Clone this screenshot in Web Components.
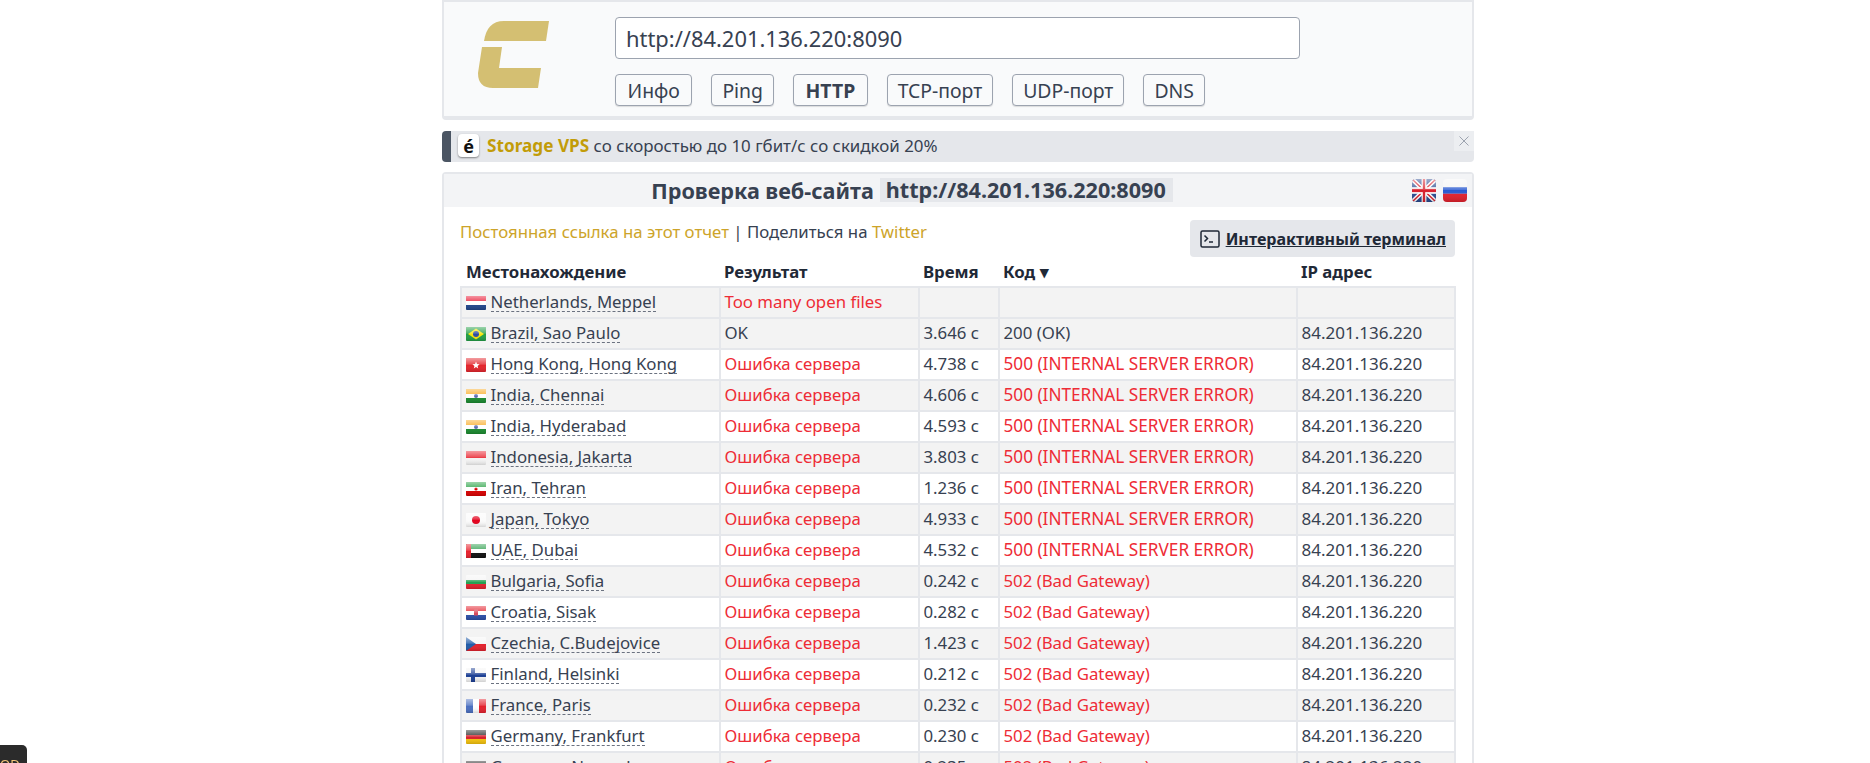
<!DOCTYPE html>
<html>
<head>
<meta charset="utf-8">
<style>
  html, body { margin: 0; padding: 0; background: #fff; overflow: hidden; height: 763px; }
  body { font-family: "Noto Sans", "Liberation Sans", sans-serif; color: #374151; font-size: 16.8px; }
</style>
</head>
<body>
<check-page></check-page>
<corner-box></corner-box>

<script>
// flag drawings, all on a 20x14 box
const FLAGS = {
  nl: `<rect width="20" height="5" fill="#e8112d"/><rect y="5" width="20" height="4" fill="#fff"/><rect y="9" width="20" height="5" fill="#21468b"/>`,
  br: `<rect width="20" height="14" fill="#229e45"/><path d="M10 1.500 18 7 10 12.500 2 7z" fill="#f8e509"/><circle cx="10" cy="7" r="3" fill="#2b49a3"/>`,
  hk: `<rect width="20" height="14" fill="#e3242b"/><path d="M10 3.500 11 6 13.600 6.200 11.600 7.900 12.200 10.500 10 9.100 7.800 10.500 8.400 7.900 6.400 6.200 9 6z" fill="#fff"/>`,
  in: `<rect width="20" height="5" fill="#f9a91f"/><rect y="5" width="20" height="4" fill="#fff"/><rect y="9" width="20" height="5" fill="#1a8a2f"/><circle cx="10" cy="7" r="2" fill="#5a6bb0"/>`,
  id: `<rect width="20" height="7" fill="#e8202c"/><rect y="7" width="20" height="7" fill="#f4f4f4"/>`,
  ir: `<rect width="20" height="5" fill="#239f40"/><rect y="5" width="20" height="4" fill="#fff"/><rect y="9" width="20" height="5" fill="#da0000"/><circle cx="10" cy="7" r="1.600" fill="#da0000"/>`,
  jp: `<rect width="20" height="14" fill="#fafafa"/><circle cx="10" cy="7" r="4" fill="#e3001b"/>`,
  ae: `<rect width="20" height="5" fill="#2a9d4a"/><rect y="5" width="20" height="4" fill="#fff"/><rect y="9" width="20" height="5" fill="#111"/><rect width="5" height="14" fill="#e8202c"/>`,
  bg: `<rect width="20" height="5" fill="#f4f4f4"/><rect y="5" width="20" height="4" fill="#22a050"/><rect y="9" width="20" height="5" fill="#e3202c"/>`,
  hr: `<rect width="20" height="5" fill="#e3202c"/><rect y="5" width="20" height="4" fill="#fff"/><rect y="9" width="20" height="5" fill="#2a4fa8"/><rect x="8" y="3.500" width="4" height="6" fill="#d8485a"/>`,
  cz: `<rect width="20" height="7" fill="#f4f4f4"/><rect y="7" width="20" height="7" fill="#e3202c"/><path d="M0 0 10 7 0 14z" fill="#1f5aa8"/>`,
  fi: `<rect width="20" height="14" fill="#f4f4f4"/><rect y="5" width="20" height="4" fill="#1c3f94"/><rect x="5" width="4" height="14" fill="#1c3f94"/>`,
  fr: `<rect width="7" height="14" fill="#4a6fc0"/><rect x="7" width="6" height="14" fill="#fff"/><rect x="13" width="7" height="14" fill="#e3202c"/>`,
  de: `<rect width="20" height="5" fill="#222"/><rect y="5" width="20" height="4" fill="#d8202c"/><rect y="9" width="20" height="5" fill="#f4c20d"/>`,
  gb: `<rect width="20" height="14" fill="#2a4a8f"/><path d="M0 0 20 14M20 0 0 14" stroke="#fff" stroke-width="3"/><path d="M0 0 20 14M20 0 0 14" stroke="#d8202c" stroke-width="1"/><rect x="8" width="4" height="14" fill="#fff"/><rect y="5" width="20" height="4" fill="#fff"/><rect x="9" width="2" height="14" fill="#d8202c"/><rect y="6" width="20" height="2" fill="#d8202c"/>`,
  ru: `<rect width="20" height="5" fill="#f4f4f4"/><rect y="5" width="20" height="4" fill="#2a5ad0"/><rect y="9" width="20" height="5" fill="#e3202c"/>`
}

class WorldFlag extends HTMLElement {
  connectedCallback() {
    const code = this.getAttribute('code')
    const id = 'gloss'
    this.attachShadow({ mode: 'open' }).innerHTML = `
      <style>
        :host { display: inline-flex; flex: none; }
        svg { display: block; border-radius: 1px; }
        :host([big]) svg { border-radius: 4px; }
      </style>
      <svg width="100%" height="100%" viewBox="0 0 20 14" preserveAspectRatio="none">
        <defs><linearGradient id="${id}" x1="0" y1="0" x2="0" y2="1">
          <stop offset="0" stop-color="#fff" stop-opacity=".55"/>
          <stop offset=".45" stop-color="#fff" stop-opacity=".2"/>
          <stop offset=".5" stop-color="#fff" stop-opacity="0"/>
          <stop offset="1" stop-color="#000" stop-opacity=".15"/>
        </linearGradient></defs>
        ${FLAGS[code]}
        <rect width="20" height="14" fill="url(#${id})"/>
      </svg>`
  }
}
customElements.define('world-flag', WorldFlag)

class ToolButton extends HTMLElement {
  constructor() {
    super()
    this.attachShadow({ mode: 'open' }).innerHTML = `
      <style>
        :host {
          display: inline-flex; align-items: center; height: 32px; box-sizing: border-box;
          padding: 0 10px; background: #f9fafb; color: #374151;
          border: 1px solid #9ca3af; border-radius: 4px; font-size: 19.4px;
          box-shadow: 0 1px 1px rgba(0,0,0,.12);
        }
        :host([wide]) { padding: 0 11.5px; }
        :host([active]) { font-weight: 700; }
      </style>
      <slot></slot>`
  }
}
customElements.define('tool-button', ToolButton)

class TopPanel extends HTMLElement {
  constructor() {
    super()
    this.attachShadow({ mode: 'open' }).innerHTML = `
      <style>
        :host {
          display: flex; box-sizing: border-box; height: 120px; background: #f9fafb;
          border: 2px solid #e5e7eb; border-bottom-width: 4px;
          border-radius: 0 0 4px 4px;
        }
        .logo { width: 171px; flex: none; padding: 19px 0 0 34px; box-sizing: border-box; }
        .form { display: flex; flex-direction: column; gap: 15px; padding-top: 15px; }
        .url {
          width: 685px; height: 42px; box-sizing: border-box; padding: 0 10px;
          display: flex; align-items: center; background: #fff;
          border: 1px solid #9ca3af; border-radius: 4px; font-size: 21.9px; color: #374151;
        }
        .tools { display: flex; gap: 19px; }
      </style>
      <div class="logo">
        <svg width="72" height="68" viewBox="0 0 72 68">
          <path d="M6 20C8 7 14 0 26 0H71L68 20Z" fill="#d4bf72"/>
          <path d="M4 26H24L21 47H63L60 67H15Q0 67 0 52Z" fill="#d4bf72"/>
        </svg>
      </div>
      <div class="form">
        <div class="url">http://84.201.136.220:8090</div>
        <div class="tools">
          <tool-button wide>Инфо</tool-button>
          <tool-button>Ping</tool-button>
          <tool-button wide active>HTTP</tool-button>
          <tool-button>TCP-порт</tool-button>
          <tool-button>UDP-порт</tool-button>
          <tool-button>DNS</tool-button>
        </div>
      </div>`
  }
}
customElements.define('top-panel', TopPanel)

class PromoBar extends HTMLElement {
  constructor() {
    super()
    this.attachShadow({ mode: 'open' }).innerHTML = `
      <style>
        :host {
          display: flex; align-items: center; position: relative; height: 31px; box-sizing: border-box;
          margin-top: 11px; background: #e5e7eb; border-left: 9px solid #4b5563;
          border-radius: 4px; font-size: 16.9px; color: #374151; padding: 0 0 2px 7px; gap: 8px;
        }
        .e {
          width: 21px; height: 23px; background: #fff; border-radius: 4px; color: #111;
          display: flex; align-items: center; justify-content: center; font-weight: 700; font-size: 18px;
          box-shadow: 0 1px 2px rgba(0,0,0,.45);
        }
        b { color: #c29c08; font-weight: 700; font-size: 17.2px; }
        .close {
          position: absolute; right: 0; top: 0; width: 20px; height: 20px; background: #eceef1;
          display: flex; align-items: center; justify-content: center;
        }
      </style>
      <div class="e">é</div>
      <div><b>Storage VPS</b> со скоростью до 10 гбит/с со скидкой 20%</div>
      <div class="close">
        <svg width="10" height="10" viewBox="0 0 10 10"><path d="M.5.5 9.500 9.500M9.500.5.5 9.500" stroke="#9ca3af" stroke-width="1" fill="none"/></svg>
      </div>`
  }
}
customElements.define('promo-bar', PromoBar)

class ResultRow extends HTMLElement {
  connectedCallback() {
    const d = JSON.parse(this.getAttribute('data'))
    const codeBad = d.code && d.code !== '200 (OK)'
    const codeCls = d.code === '500 (INTERNAL SERVER ERROR)' ? 'long' : ''
    this.attachShadow({ mode: 'open' }).innerHTML = `
      <style>
        :host {
          display: grid; grid-template-columns: 259px 199px 80px 298px 160px; height: 31px;
          box-sizing: border-box; border-top: 2px solid #e5e7eb; background: #fff; font-size: 16.8px; color: #374151;
        }
        :host([odd]) { background: #f3f3f3; }
        div { display: flex; align-items: center; padding: 0 0 2px 3.5px; border-left: 2px solid #e5e7eb; box-sizing: border-box; white-space: nowrap; gap: 5px; }
        div:first-child { padding-left: 5px; font-size: 16.3px; }
        div:last-child { border-right: 2px solid #e5e7eb; font-size: 17px; }
        div.long { font-size: 17.2px; }
        world-flag { width: 20px; height: 14px; margin-top: 2px; }
        span { border-bottom: 1px dashed #6b7280; line-height: 19px; }
        .bad { color: #ee2c36; }
      </style>
      <div><world-flag code="${d.flag}"></world-flag><span>${d.loc}</span></div>
      <div class="${d.result === 'OK' ? '' : 'bad'}">${d.result}</div>
      <div>${d.time}</div>
      <div class="${codeCls} ${codeBad ? 'bad' : ''}">${d.code}</div>
      <div>${d.ip}</div>`
  }
}
customElements.define('result-row', ResultRow)

const IP = '84.201.136.220'
const E500 = '500 (INTERNAL SERVER ERROR)'
const E502 = '502 (Bad Gateway)'
const ERR = 'Ошибка сервера'
const ROWS = [
  ['nl', 'Netherlands, Meppel', 'Too many open files', '', '', ''],
  ['br', 'Brazil, Sao Paulo', 'OK', '3.646 с', '200 (OK)', IP],
  ['hk', 'Hong Kong, Hong Kong', ERR, '4.738 с', E500, IP],
  ['in', 'India, Chennai', ERR, '4.606 с', E500, IP],
  ['in', 'India, Hyderabad', ERR, '4.593 с', E500, IP],
  ['id', 'Indonesia, Jakarta', ERR, '3.803 с', E500, IP],
  ['ir', 'Iran, Tehran', ERR, '1.236 с', E500, IP],
  ['jp', 'Japan, Tokyo', ERR, '4.933 с', E500, IP],
  ['ae', 'UAE, Dubai', ERR, '4.532 с', E500, IP],
  ['bg', 'Bulgaria, Sofia', ERR, '0.242 с', E502, IP],
  ['hr', 'Croatia, Sisak', ERR, '0.282 с', E502, IP],
  ['cz', 'Czechia, C.Budejovice', ERR, '1.423 с', E502, IP],
  ['fi', 'Finland, Helsinki', ERR, '0.212 с', E502, IP],
  ['fr', 'France, Paris', ERR, '0.232 с', E502, IP],
  ['de', 'Germany, Frankfurt', ERR, '0.230 с', E502, IP],
  ['de', 'Germany, Nuremberg', ERR, '0.235 с', E502, IP]
]

class ResultPanel extends HTMLElement {
  constructor() {
    super()
    const rows = ROWS.map((r, i) => {
      const data = JSON.stringify({ flag: r[0], loc: r[1], result: r[2], time: r[3], code: r[4], ip: r[5] }).replace(/"/g, '&quot;')
      // the first row is grey as well, after it every second one
      return `<result-row data="${data}" ${i === 0 || i % 2 === 1 ? 'odd' : ''}></result-row>`
    }).join('')
    this.attachShadow({ mode: 'open' }).innerHTML = `
      <style>
        :host {
          display: block; margin-top: 10px; background: #fff; border: 2px solid #e5e7eb;
          border-bottom: 0; border-radius: 4px 4px 0 0;
        }
        .head {
          height: 33px; background: #f3f4f6; position: relative; display: flex; align-items: center; justify-content: center;
          font-size: 21.6px; font-weight: 700; gap: 6px; padding: 0 92px 1px 0; box-sizing: border-box; color: #374151;
        }
        code { font: inherit; background: #e5e7eb; padding: 0 7px 0 6px; line-height: 24px; }
        .langs { position: absolute; right: 5px; top: 5px; display: flex; gap: 7px; }
        .langs world-flag { width: 24px; height: 23px; }
        .body { padding: 0 16px; }
        .meta { display: flex; justify-content: space-between; align-items: flex-start; height: 51px; padding: 13px 1px 0 0; box-sizing: border-box; font-size: 16.8px; line-height: 24px; }
        .meta a { color: #cda42a; text-decoration: none; }
        .term {
          display: flex; align-items: center; gap: 6px; height: 37px; padding: 0 9px 0 10px; box-sizing: border-box;
          background: #e5e7eb; border-radius: 4px; font-weight: 700; font-size: 16.1px; color: #1f2937;
        }
        .term span { text-decoration: underline; }
        .cols { display: grid; grid-template-columns: 259px 199px 80px 298px 160px; height: 28px; align-items: center; font-weight: 700; font-size: 16.8px; color: #1f2937; padding-bottom: 2px; box-sizing: border-box; }
        .cols div { padding-left: 5px; }
        .cols div:first-child { padding-left: 6px; }
      </style>
      <div class="head">
        <span>Проверка веб-сайта</span><code>http://84.201.136.220:8090</code>
        <div class="langs"><world-flag big code="gb"></world-flag><world-flag big code="ru"></world-flag></div>
      </div>
      <div class="body">
        <div class="meta">
          <div><a>Постоянная ссылка на этот отчет</a> | Поделиться на <a>Twitter</a></div>
          <div class="term">
            <svg width="20" height="18" viewBox="0 0 20 18" fill="none" stroke="#1f2937" stroke-width="1.5">
              <rect x="1" y="1" width="18" height="16" rx="1.500"/>
              <path d="M4.500 5.500 7.500 8.500 4.500 11.500M9 12H13"/>
            </svg>
            <span>Интерактивный терминал</span>
          </div>
        </div>
        <div class="cols"><div>Местонахождение</div><div>Результат</div><div>Время</div><div>Код ▾</div><div>IP адрес</div></div>
        ${rows}
      </div>`
  }
}
customElements.define('result-panel', ResultPanel)

class CheckPage extends HTMLElement {
  constructor() {
    super()
    this.attachShadow({ mode: 'open' }).innerHTML = `
      <style>
        :host { display: block; width: 1032px; margin-left: 442px; }
      </style>
      <top-panel></top-panel>
      <promo-bar></promo-bar>
      <result-panel></result-panel>`
  }
}
customElements.define('check-page', CheckPage)

class CornerBox extends HTMLElement {
  constructor() {
    super()
    this.attachShadow({ mode: 'open' }).innerHTML = `
      <style>
        :host {
          position: fixed; left: 0; top: 745px; width: 27px; height: 18px; background: #2b2b2b;
          border-radius: 0 5px 0 0; color: #f5c67a; font-size: 13px; overflow: hidden;
          padding-top: 10px; box-sizing: border-box;
        }
      </style>
      <div>OD</div>`
  }
}
customElements.define('corner-box', CornerBox)
</script>
</body>
</html>
